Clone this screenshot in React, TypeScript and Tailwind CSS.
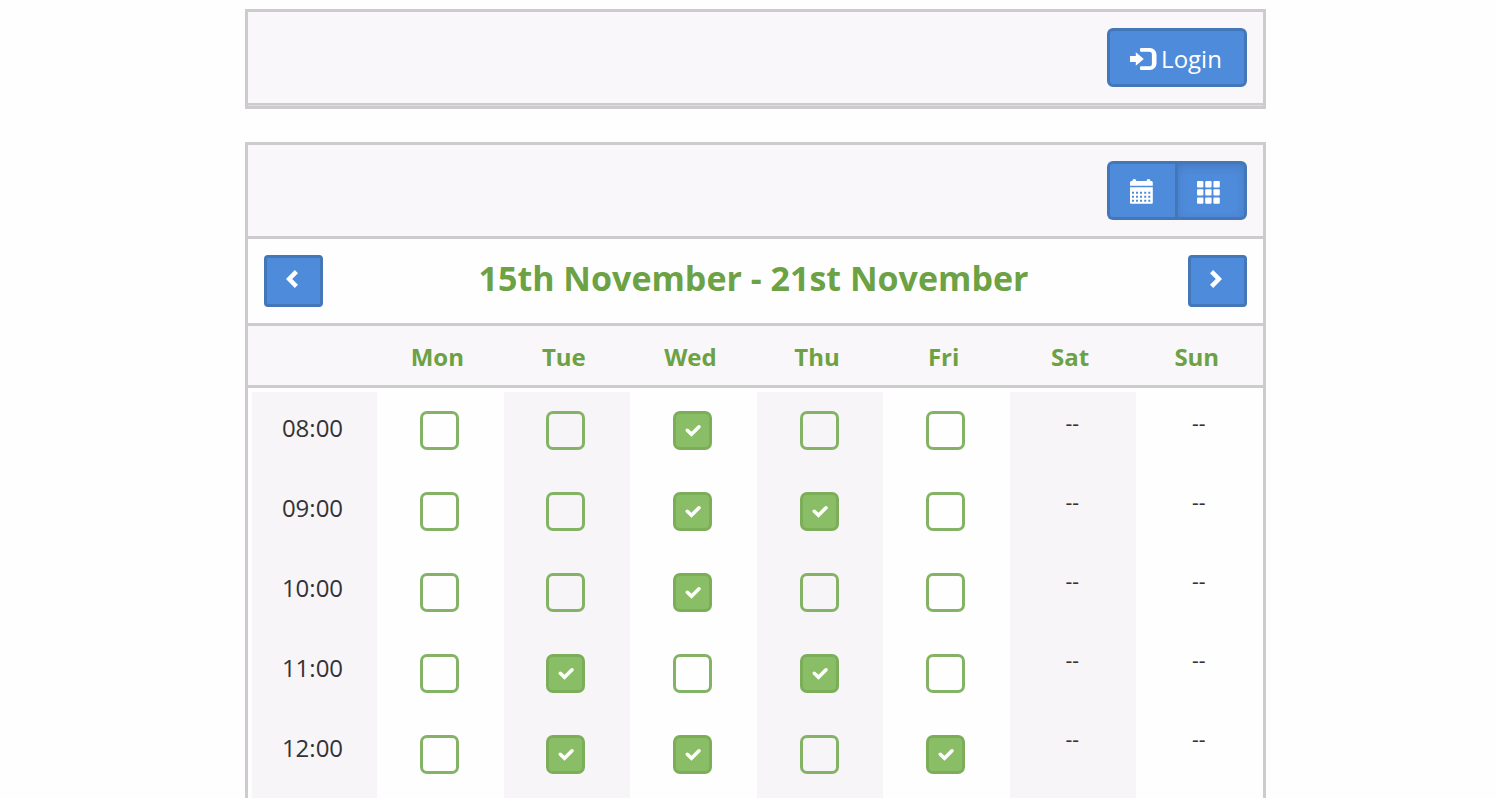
import { useState } from 'react'

const times = ['08:00', '09:00', '10:00', '11:00', '12:00']

const days = [
  { name: 'Mon', open: true, booked: [] as string[] },
  { name: 'Tue', open: true, booked: ['11:00', '12:00'] },
  { name: 'Wed', open: true, booked: ['08:00', '09:00', '10:00', '12:00'] },
  { name: 'Thu', open: true, booked: ['09:00', '11:00'] },
  { name: 'Fri', open: true, booked: ['12:00'] },
  { name: 'Sat', open: false, booked: [] as string[] },
  { name: 'Sun', open: false, booked: [] as string[] },
]

const buttonBase =
  'flex items-center justify-center border-[3px] border-[#4377b8] bg-[#4f8bdb] text-white'

const headCell =
  'flex h-[62px] items-center justify-center border-b-[3px] border-[#cdcbce] bg-[#f9f7fa] pt-0.5 pr-1.5 text-2xl leading-8 font-bold text-[#6ca244]'

function LoginIcon() {
  return (
    <svg width="27" height="22" viewBox="0 0 27 22" fill="currentColor" aria-hidden="true">
      <path d="M0 8h5.800V4.200L13.800 11l-8 6.800V14H0z" />
      <path d="M11 0h9a6.500 6.500 0 0 1 6.500 6.500v9A6.500 6.500 0 0 1 20 22h-9a1 1 0 0 1-1-1v-1.700a1 1 0 0 1 1-1h8.300a2.600 2.600 0 0 0 2.600-2.600V6.300a2.600 2.600 0 0 0-2.600-2.600H11a1 1 0 0 1-1-1V1a1 1 0 0 1 1-1z" />
    </svg>
  )
}

function CalendarIcon() {
  return (
    <svg width="23" height="25" viewBox="0 0 23 25" fill="currentColor" aria-hidden="true">
      <path d="M0 6.700V3.500A1.500 1.500 0 0 1 1.500 2H2.300a2 2 0 0 1 4 0H16.500a2 2 0 0 1 4 0h.800A1.500 1.500 0 0 1 22.800 3.500V6.700z" />
      <path
        fillRule="evenodd"
        d="M0 8.300h22.800V23.700a1 1 0 0 1-1 1H1a1 1 0 0 1-1-1z M2 12.700v2h2v-2z M6 12.700v2h2v-2z M10 12.700v2h2v-2z M14.200 12.700v2h2v-2z M18.300 12.700v2h2v-2z M2 16.700v2h2v-2z M6 16.700v2h2v-2z M10 16.700v2h2v-2z M14.200 16.700v2h2v-2z M18.300 16.700v2h2v-2z M2 20.700v2h2v-2z M6 20.700v2h2v-2z M10 20.700v2h2v-2z M14.200 20.700v2h2v-2z M18.300 20.700v2h2v-2z"
      />
    </svg>
  )
}

function GridIcon() {
  return (
    <svg width="23" height="23" viewBox="0 0 23 23" fill="currentColor" aria-hidden="true">
      {[0, 8.2, 16.4].map((y) =>
        [0, 8.2, 16.4].map((x) => (
          <rect key={`${x}-${y}`} x={x} y={y} width="6.4" height="6.4" rx="1" />
        )),
      )}
    </svg>
  )
}

function Chevron({ direction }: { direction: 'left' | 'right' }) {
  return (
    <svg width="12" height="18" viewBox="0 0 12 18" fill="currentColor" aria-hidden="true">
      <path
        d={
          direction === 'left'
            ? 'M8.800 0 12 3.200 6.200 9 12 14.800 8.800 18 0 9z'
            : 'M3.200 0 0 3.200 5.800 9 0 14.800 3.200 18 12 9z'
        }
      />
    </svg>
  )
}

function Slot({ label, initial }: { label: string; initial: boolean }) {
  const [checked, setChecked] = useState(initial)

  return (
    <label className="relative block size-[39px]">
      <input
        type="checkbox"
        aria-label={label}
        checked={checked}
        onChange={(e) => setChecked(e.target.checked)}
        className="block size-full appearance-none rounded-[7px] border-[3px] border-[#84b365] checked:border-[#7cae5a] checked:bg-[#8abe66]"
      />
      {checked && (
        <svg
          viewBox="0 0 39 39"
          className="pointer-events-none absolute inset-0 size-full"
          fill="none"
          stroke="white"
          strokeWidth="3.6"
          strokeLinecap="round"
          aria-hidden="true"
        >
          <path d="M14.300 19.300 18.500 23.300 26 15.800" />
        </svg>
      )}
    </label>
  )
}

export default function App() {
  const [view, setView] = useState('grid')

  return (
    <div className="flex min-h-screen flex-col bg-[#fefefe] pt-[9px] pl-[15px] font-['Open_Sans','Noto_Sans',sans-serif] text-[#333]">
      <header className="mx-auto w-full max-w-[1021px] border-[3px] border-[#cdcbce] bg-[#dddbde] pb-px">
        <div className="flex justify-end border-b-2 border-[#cdcbce] bg-[#f9f7fa] px-4 py-4">
          <button
            type="button"
            className={`${buttonBase} h-[59px] w-[140px] gap-1 rounded-md pt-0.5 pr-0.5 text-2xl leading-8`}
          >
            <LoginIcon />
            Login
          </button>
        </div>
      </header>

      <main className="mx-auto mt-[33px] flex w-full max-w-[1021px] flex-1 flex-col border-x-[3px] border-t-[3px] border-[#cdcbce]">
        <div className="flex justify-end border-b-[3px] border-[#cdcbce] bg-[#f9f7fa] px-4 py-4">
          <div className="flex h-[59px] w-[140px]" role="group" aria-label="View">
            <button
              type="button"
              aria-label="Calendar view"
              aria-pressed={view === 'calendar'}
              onClick={() => setView('calendar')}
              className={`${buttonBase} flex-1 rounded-l-md border-r-0 pt-0.5 pr-0.5`}
            >
              <CalendarIcon />
            </button>
            <button
              type="button"
              aria-label="Grid view"
              aria-pressed={view === 'grid'}
              onClick={() => setView('grid')}
              className={`${buttonBase} flex-1 rounded-r-md pt-1 pr-1 shadow-[inset_0_3px_8px_rgba(0,0,0,0.12)]`}
            >
              <GridIcon />
            </button>
          </div>
        </div>

        <div className="flex items-start justify-between border-b-[3px] border-[#cdcbce] px-4 py-4">
          <button
            type="button"
            aria-label="Previous week"
            className={`${buttonBase} h-[52px] w-[59px] rounded-sm pr-1 pb-1`}
          >
            <Chevron direction="left" />
          </button>
          <h1 className="pr-1 text-[34px] leading-[46px] font-bold text-[#6ca244]">
            15th November - 21st November
          </h1>
          <button
            type="button"
            aria-label="Next week"
            className={`${buttonBase} h-[52px] w-[59px] rounded-sm pr-1 pb-1`}
          >
            <Chevron direction="right" />
          </button>
        </div>

        {/* one <tr> per day, laid out as a column so each keeps its own row rhythm */}
        <table className="flex flex-1">
          <tbody className="flex flex-1">
            <tr className="flex w-[129px] flex-col">
              <td className={headCell} />
              {times.map((time) => (
                <th
                  key={time}
                  scope="col"
                  className="ml-1 flex h-20 items-start justify-center bg-[#f7f5f8] pt-5 pr-1 text-2xl leading-8 font-normal first-of-type:mt-1 last:flex-1"
                >
                  {time}
                </th>
              ))}
            </tr>
            {days.map((day) => (
              <tr key={day.name} className="group flex flex-1 flex-col">
                <th scope="row" className={headCell}>
                  {day.name}
                </th>
                {times.map((time) => (
                  <td
                    key={time}
                    className={`flex items-start justify-center pr-0.5 first-of-type:mt-1 last:flex-1 group-even:bg-transparent group-odd:bg-[#f7f5f8] ${
                      day.open ? 'h-[81px] pt-[19px]' : 'h-[79px] pt-[17px] text-[21px] leading-7'
                    }`}
                  >
                    {day.open ? (
                      <Slot label={`${day.name} ${time}`} initial={day.booked.includes(time)} />
                    ) : (
                      '--'
                    )}
                  </td>
                ))}
              </tr>
            ))}
          </tbody>
        </table>
      </main>
    </div>
  )
}
